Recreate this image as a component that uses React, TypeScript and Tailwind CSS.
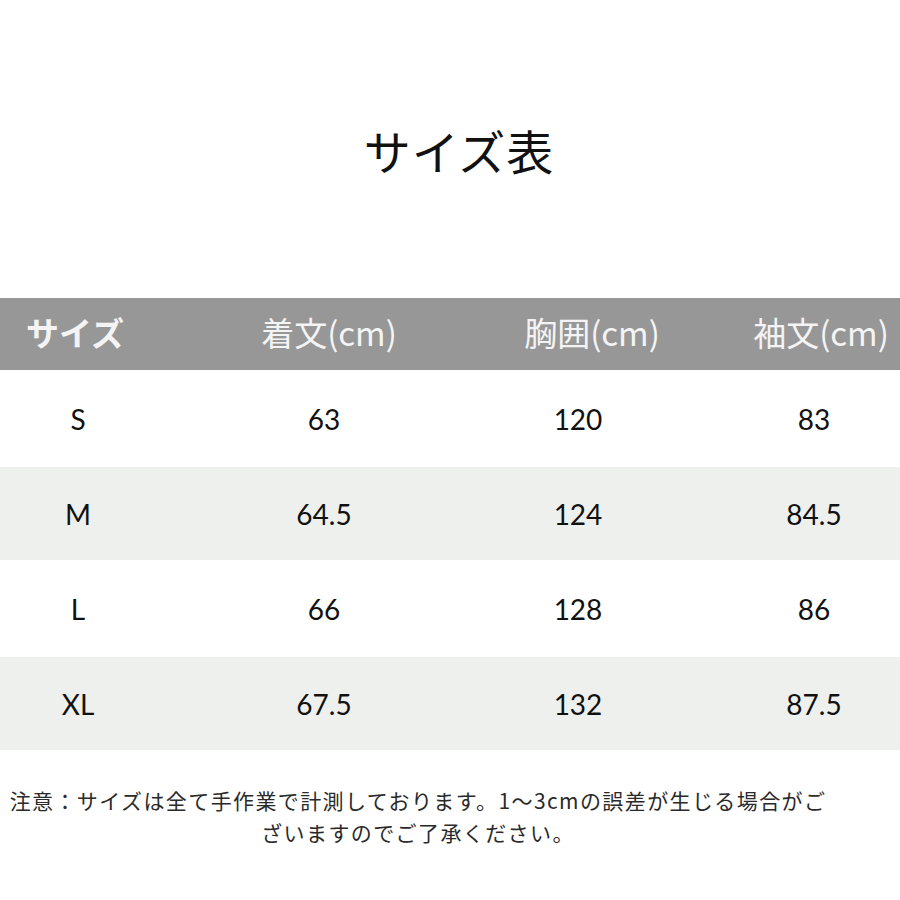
import React from 'react';

const rows = [
  { size: 'S', length: '63', chest: '120', sleeve: '83' },
  { size: 'M', length: '64.5', chest: '124', sleeve: '84.5' },
  { size: 'L', length: '66', chest: '128', sleeve: '86' },
  { size: 'XL', length: '67.5', chest: '132', sleeve: '87.5' },
];

const jp = { fontFamily: '"Noto Sans CJK JP", "Noto Sans", sans-serif' };
const num = { fontFamily: 'Lato, "Noto Sans CJK JP", sans-serif' };

export default function App() {
  return (
    <div className="w-[900px] h-[900px] bg-white overflow-hidden" style={jp}>
      <div className="h-[298px] flex justify-center pt-[118px]">
        <h1 className="text-[47px] leading-[64px] text-[#111] font-normal tracking-[1px] ml-[18px]">サイズ表</h1>
      </div>

      <div className="h-[72px] bg-[#979797] flex items-center text-[#f4f4f4] text-[33px] pb-[2px] overflow-hidden">
        <div className="w-[150px] shrink-0 text-center font-bold">サイズ</div>
        <div className="w-[358px] shrink-0 text-center">着文(cm)</div>
        <div className="w-[168px] shrink-0 text-center">胸囲(cm)</div>
        <div className="w-[290px] shrink-0 text-center">袖文(cm)</div>
      </div>

      {rows.map((r, i) => (
        <div
          key={r.size}
          className={`flex items-center text-[28px] text-[#111] overflow-hidden ${i % 2 === 1 ? 'bg-[#eef0ee] h-[93px]' : 'bg-white h-[97px]'}`}
          style={num}
        >
          <div className="w-[156px] shrink-0 text-center">{r.size}</div>
          <div className="w-[336px] shrink-0 text-center">{r.length}</div>
          <div className="w-[172px] shrink-0 text-center">{r.chest}</div>
          <div className="w-[300px] shrink-0 text-center">{r.sleeve}</div>
        </div>
      ))}

      <p className="w-[836px] text-center text-[21px] leading-[32px] text-[#2a2a2a] mt-[34px] tracking-[1.4px]">
        注意：サイズは全て手作業で計測しております。1～3cmの誤差が生じる場合がご
        <br />
        ざいますのでご了承ください。
      </p>
    </div>
  );
}
